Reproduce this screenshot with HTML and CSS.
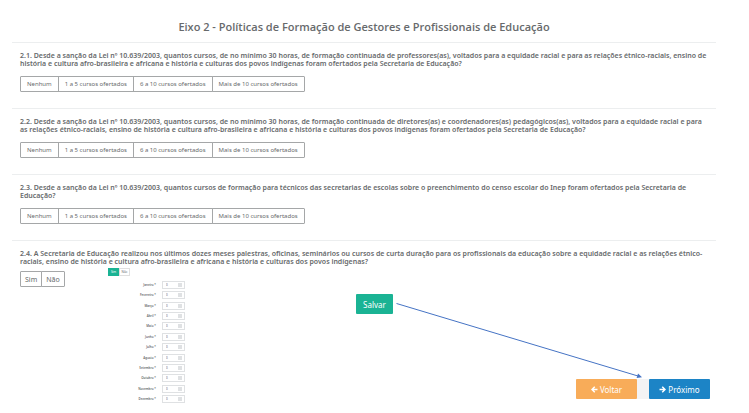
FILE: index.html
```
<!DOCTYPE html>
<html lang="pt-BR">
<head>
    <meta charset="UTF-8">
    <meta name="viewport" content="width=device-width, initial-scale=1.0">
    <title>Eixo 2 - Políticas de Formação</title>
    <link rel="stylesheet" href="styles.css">
</head>
<body>
    <h1 class="title">Eixo 2 - Políticas de Formação de Gestores e Profissionais de Educação</h1>

    <section class="question">
        <p class="question-text">2.1. Desde a sanção da Lei nº 10.639/2003, quantos cursos, de no mínimo 30 horas, de formação continuada de professores(as), voltados para a equidade racial e para as relações étnico-raciais, ensino de história e cultura afro-brasileira e africana e história e culturas dos povos indígenas foram ofertados pela Secretaria de Educação?</p>
        <div class="btn-group">
            <button type="button">Nenhum</button>
            <button type="button">1 a 5 cursos ofertados</button>
            <button type="button">6 a 10 cursos ofertados</button>
            <button type="button">Mais de 10 cursos ofertados</button>
        </div>
    </section>

    <section class="question">
        <p class="question-text">2.2. Desde a sanção da Lei nº 10.639/2003, quantos cursos, de no mínimo 30 horas, de formação continuada de diretores(as) e coordenadores(as) pedagógicos(as), voltados para a equidade racial e para as relações étnico-raciais, ensino de história e cultura afro-brasileira e africana e história e culturas dos povos indígenas foram ofertados pela Secretaria de Educação?</p>
        <div class="btn-group">
            <button type="button">Nenhum</button>
            <button type="button">1 a 5 cursos ofertados</button>
            <button type="button">6 a 10 cursos ofertados</button>
            <button type="button">Mais de 10 cursos ofertados</button>
        </div>
    </section>

    <section class="question">
        <p class="question-text">2.3. Desde a sanção da Lei nº 10.639/2003, quantos cursos de formação para técnicos das secretarias de escolas sobre o preenchimento do censo escolar do Inep foram ofertados pela Secretaria de Educação?</p>
        <div class="btn-group">
            <button type="button">Nenhum</button>
            <button type="button">1 a 5 cursos ofertados</button>
            <button type="button">6 a 10 cursos ofertados</button>
            <button type="button">Mais de 10 cursos ofertados</button>
        </div>
    </section>

    <section class="question question-last">
        <p class="question-text">2.4. A Secretaria de Educação realizou nos últimos dozes meses palestras, oficinas, seminários ou cursos de curta duração para os profissionais da educação sobre a equidade racial e as relações étnico-raciais, ensino de história e cultura afro-brasileira e africana e história e culturas dos povos indígenas?</p>
        <div class="answer">
            <div class="btn-group btn-group-lg">
                <button type="button">Sim</button>
                <button type="button">Não</button>
            </div>

            <div class="months">
                <div class="toggle">
                    <button type="button" class="active">Sim</button>
                    <button type="button">Não</button>
                </div>
                <div class="month-list">
                    <div class="month"><label for="m1">Janeiro *</label><input id="m1" type="text" value="0"></div>
                    <div class="month"><label for="m2">Fevereiro *</label><input id="m2" type="text" value="0"></div>
                    <div class="month"><label for="m3">Março *</label><input id="m3" type="text" value="0"></div>
                    <div class="month"><label for="m4">Abril *</label><input id="m4" type="text" value="0"></div>
                    <div class="month"><label for="m5">Maio *</label><input id="m5" type="text" value="0"></div>
                    <div class="month"><label for="m6">Junho *</label><input id="m6" type="text" value="0"></div>
                    <div class="month"><label for="m7">Julho *</label><input id="m7" type="text" value="0"></div>
                    <div class="month"><label for="m8">Agosto *</label><input id="m8" type="text" value="0"></div>
                    <div class="month"><label for="m9">Setembro *</label><input id="m9" type="text" value="0"></div>
                    <div class="month"><label for="m10">Outubro *</label><input id="m10" type="text" value="0"></div>
                    <div class="month"><label for="m11">Novembro *</label><input id="m11" type="text" value="0"></div>
                    <div class="month"><label for="m12">Dezembro *</label><input id="m12" type="text" value="0"></div>
                </div>
            </div>

            <div class="actions">
                <button type="button" class="btn btn-save">Salvar</button>
                <svg class="arrow" viewBox="0 0 246 76" preserveAspectRatio="none">
                    <path d="M0.5 0.5L242 74" fill="none" stroke="#4472c4" stroke-width="1"/>
                    <path d="M246 75.3L240.6 76L242 71.5Z" fill="#4472c4"/>
                </svg>
                <div class="nav">
                    <button type="button" class="btn btn-back">
                        <svg class="icon" viewBox="0 0 14 14"><path d="M7.5 1.5L2 7l5.500 5.500M2.500 7H13" fill="none" stroke="currentColor" stroke-width="3"/></svg>
                        Voltar
                    </button>
                    <button type="button" class="btn btn-next">
                        <svg class="icon" viewBox="0 0 14 14"><path d="M6.500 1.500L12 7l-5.500 5.500M11.500 7H1" fill="none" stroke="currentColor" stroke-width="3"/></svg>
                        Próximo
                    </button>
                </div>
            </div>
        </div>
    </section>
</body>
</html>
```
FILE: styles.css
```
* {
    box-sizing: border-box;
}

body {
    display: flex;
    flex-direction: column;
    min-height: 100vh;
    margin: 0;
    padding: 20px 33px 10px 12px;
    font-family: "Noto Sans", "Open Sans", Arial, sans-serif;
    color: #676a6c;
    background-color: #fff;
}

button, input {
    margin: 0;
    font-family: inherit;
    color: inherit;
}

button {
    cursor: pointer;
}

.title {
    margin: 0 0 8px;
    font-family: "Open Sans", Arial, sans-serif;
    font-size: 11px;
    line-height: 14px;
    font-weight: 600;
    text-align: center;
}

.question {
    padding: 9px 0 16px 8px;
    border-top: 1px solid #eceeef;
}

.question-text {
    margin: 0 0 8px;
    padding-right: 8px;
    font-size: 7px;
    line-height: 8px;
    font-weight: 600;
}

.btn-group {
    display: flex;
    align-self: flex-start;
}

.btn-group button {
    height: 16px;
    padding: 0 6px;
    border: 1px solid #a5a7a8;
    margin-left: -1px;
    background-color: #fff;
    font-size: 6px;
}

.btn-group button:first-child {
    margin-left: 0;
    border-radius: 1px 0 0 1px;
}

.btn-group button:last-child {
    border-radius: 0 1px 1px 0;
}

.btn-group-lg button {
    padding: 0 4px;
    font-size: 7px;
}

.question-last {
    flex: 1;
    display: flex;
    flex-direction: column;
    padding-bottom: 0;
}

.question-last .question-text {
    margin-bottom: 2px;
}

.answer {
    flex: 1;
    display: grid;
    grid-template-columns: 88px 77px 1fr;
}

.answer .btn-group {
    align-self: start;
    margin-top: 3px;
}

/* month counters */
.months {
    display: flex;
    flex-direction: column;
}

.toggle {
    display: flex;
}

.toggle button {
    width: 11px;
    height: 8px;
    padding: 0;
    border: 1px solid #e0e0e0;
    background-color: #fff;
    font-size: 3px;
    line-height: 4px;
}

.toggle .active {
    border-color: #1ab394;
    background-color: #1ab394;
    color: #fff;
}

.month-list {
    flex: 1;
    display: flex;
    flex-direction: column;
    justify-content: space-between;
    margin-top: 5px;
}

.month {
    display: flex;
    align-items: center;
    justify-content: flex-end;
    gap: 6px;
    height: 8px;
}

.month label {
    font-size: 3px;
    line-height: 4px;
    font-weight: 600;
}

.month input {
    width: 23px;
    height: 8px;
    padding: 0 3px;
    border: 1px solid #dfe1e3;
    background: linear-gradient(#dfe1e3, #dfe1e3) no-repeat right 2px center / 4px 4px;
    font-size: 3px;
}

/* buttons */
.actions {
    position: relative;
    display: flex;
    flex-direction: column;
    justify-content: space-between;
    align-items: flex-start;
    padding: 26px 6px 4px 171px;
}

.btn {
    display: flex;
    align-items: center;
    justify-content: center;
    gap: 2px;
    height: 20px;
    padding: 0 7px;
    border: 0;
    border-radius: 1px;
    color: #fff;
    font-size: 8px;
}

.btn-save {
    background-color: #1ab394;
}

.arrow {
    position: absolute;
    top: 35px;
    left: 211px;
    width: calc(100% - 285px);
    height: calc(100% - 60px);
}

.nav {
    display: flex;
    align-self: flex-end;
    gap: 12px;
    background-color: #f3f3f4;
}

.nav .btn {
    width: 61px;
}

.btn-back {
    background-color: #f8ac59;
}

.btn-next {
    background-color: #1c84c6;
}

.icon {
    width: 7px;
    height: 7px;
}
```
